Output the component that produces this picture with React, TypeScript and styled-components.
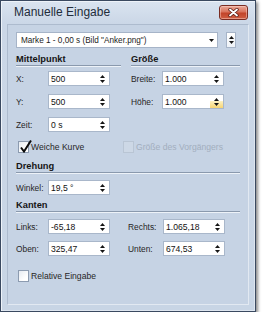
import React from "react";
import styled, { createGlobalStyle } from "styled-components";

const GlobalStyle = createGlobalStyle`
  html, body {
    margin: 0;
    padding: 0;
    background: #ffffff;
  }
  body {
    font-family: "Liberation Sans", Arial, sans-serif;
    color: #1c1c1c;
  }
`;

const Window = styled.div`
  width: 254px;
  height: 310px;
  border: 1px solid #3a4960;
  background: linear-gradient(#dae4f0 0px, #cbd7e7 22px, #c8d5e5 100%);
  box-shadow: inset 1px 1px 0 #eef3f9, inset -1px -1px 0 #dde5ef,
    2px 2px 3px rgba(0, 0, 0, 0.45);
  display: flex;
  flex-direction: column;
`;

const TitleBar = styled.div`
  height: 23px;
  display: flex;
  align-items: flex-start;
  padding: 4px 7px 0 13px;
  box-sizing: border-box;
`;

const Title = styled.div`
  font-size: 12px;
  line-height: 14px;
  color: #222c3a;
`;

const CloseButton = styled.div`
  margin-left: auto;
  width: 29px;
  height: 15px;
  box-sizing: border-box;
  border: 1px solid #7a2c22;
  border-radius: 3px;
  background: linear-gradient(#eaa898 0%, #d9735c 45%, #c2442a 55%, #cf5e42 100%);
  box-shadow: inset 0 0 0 1px rgba(255, 220, 210, 0.45);
  display: flex;
  align-items: center;
  justify-content: center;
`;

const Client = styled.div`
  flex: 1;
  margin: 0 6px 6px 6px;
  border: 1px solid;
  border-color: #adbbce #e2e9f2 #e2e9f2 #adbbce;
  background: #c6d3e4;
  padding: 7px 8px 0 8px;
  display: flex;
  flex-direction: column;
`;

const DropRow = styled.div`
  display: flex;
  gap: 8px;
  height: 16px;
`;

const Dropdown = styled.div`
  width: 202px;
  height: 16px;
  box-sizing: border-box;
  border: 1px solid #a6b4c8;
  background: #ffffff;
  display: flex;
  align-items: center;
  justify-content: space-between;
  padding: 0 3px 0 4px;
  font-size: 8.2px;
  white-space: nowrap;
`;

const SpinBox = styled.div`
  width: 10px;
  height: 16px;
  box-sizing: border-box;
  border: 1px solid #a6b4c8;
  background: linear-gradient(#ffffff, #eef2f7);
  display: flex;
  flex-direction: column;
  align-items: center;
  justify-content: center;
  gap: 2px;
`;

const Columns = styled.div`
  display: grid;
  grid-template-columns: 105px 1fr;
  column-gap: 10px;
  margin-top: 6px;
`;

const Column = styled.div`
  display: flex;
  flex-direction: column;
`;

const SectionTitle = styled.div<{ $top?: number; $bottom?: number }>`
  font-size: 9.3px;
  font-weight: bold;
  line-height: 11px;
  color: #151515;
  border-bottom: 1px solid #8a99ad;
  box-shadow: 0 1px 0 #edf2f8;
  margin-top: ${(p) => p.$top ?? 0}px;
  margin-bottom: ${(p) => p.$bottom ?? 0}px;
`;

const Stack = styled.div<{ $gap: number }>`
  display: flex;
  flex-direction: column;
  gap: ${(p) => p.$gap}px;
`;

const Field = styled.div`
  display: flex;
  align-items: center;
  height: 15px;
`;

const Label = styled.span<{ $w: number }>`
  width: ${(p) => p.$w}px;
  font-size: 8.4px;
  color: #262626;
  white-space: nowrap;
`;

const InputBox = styled.div`
  position: relative;
  width: 62px;
  height: 15px;
  box-sizing: border-box;
  border: 1px solid #a9b7ca;
  background: #ffffff;
  display: flex;
  align-items: center;
  padding-left: 2px;
  font-size: 8.6px;
  color: #111111;
`;

const Arrows = styled.div<{ $hot?: boolean }>`
  position: absolute;
  right: 0;
  top: 0;
  bottom: 0;
  width: 13px;
  display: flex;
  flex-direction: column;
  align-items: center;
  justify-content: center;
  gap: 2px;
  background: ${(p) =>
    p.$hot
      ? "linear-gradient(transparent 0 50%, #fdf0bd 50%, #f7d472 100%)"
      : "transparent"};
`;

const CheckRow = styled.div<{ $top: number }>`
  display: flex;
  align-items: center;
  margin-top: ${(p) => p.$top}px;
  padding-left: 2px;
  height: 12px;
`;

const CheckItem = styled.div<{ $w?: number }>`
  display: flex;
  align-items: center;
  gap: 2px;
  width: ${(p) => (p.$w ? `${p.$w}px` : "auto")};
`;

const Box = styled.div<{ $disabled?: boolean }>`
  position: relative;
  width: 11px;
  height: 12px;
  box-sizing: border-box;
  border: 1px solid ${(p) => (p.$disabled ? "#b9c5d4" : "#8c9bb0")};
  background: ${(p) =>
    p.$disabled
      ? "#cdd8e6"
      : "linear-gradient(135deg, #e6ebf1 0%, #ffffff 70%)"};
`;

const Tick = styled.svg`
  position: absolute;
  left: 0px;
  top: -3px;
`;

const CheckText = styled.span<{ $disabled?: boolean }>`
  font-size: 8.6px;
  color: ${(p) => (p.$disabled ? "#a2aebe" : "#262626")};
  white-space: nowrap;
`;

const EdgeGrid = styled.div`
  display: grid;
  grid-template-columns: 112px 1fr;
  row-gap: 7px;
`;

const Up = () => (
  <svg width="5" height="3" viewBox="0 0 5 3">
    <polygon points="2.5,0 5,3 0,3" fill="#151515" />
  </svg>
);

const Down = () => (
  <svg width="5" height="3" viewBox="0 0 5 3">
    <polygon points="0,0 5,0 2.5,3" fill="#151515" />
  </svg>
);

const Spin = ({ value, hot }: { value: string; hot?: boolean }) => (
  <InputBox>
    {value}
    <Arrows $hot={hot}>
      <Up />
      <Down />
    </Arrows>
  </InputBox>
);

const Row = ({
  label,
  w,
  value,
  hot,
}: {
  label: string;
  w: number;
  value: string;
  hot?: boolean;
}) => (
  <Field>
    <Label $w={w}>{label}</Label>
    <Spin value={value} hot={hot} />
  </Field>
);

const Check = ({
  text,
  checked,
  disabled,
  w,
}: {
  text: string;
  checked?: boolean;
  disabled?: boolean;
  w?: number;
}) => (
  <CheckItem $w={w}>
    <Box $disabled={disabled}>
      {checked && (
        <Tick width="13" height="14" viewBox="0 0 13 14">
          <path
            d="M2 8.5 L5 12.5 L12 1.5"
            fill="none"
            stroke="#0c0c0c"
            strokeWidth="2"
          />
        </Tick>
      )}
    </Box>
    <CheckText $disabled={disabled}>{text}</CheckText>
  </CheckItem>
);

export default function App() {
  return (
    <>
      <GlobalStyle />
      <Window>
        <TitleBar>
          <Title>Manuelle Eingabe</Title>
          <CloseButton>
            <svg width="11" height="9" viewBox="0 0 11 9">
              <path
                d="M2 1.5 L9 7.5 M9 1.5 L2 7.5"
                stroke="#5a1c14"
                strokeWidth="3.4"
                strokeLinecap="round"
              />
              <path
                d="M2 1.5 L9 7.5 M9 1.5 L2 7.5"
                stroke="#ffffff"
                strokeWidth="1.8"
                strokeLinecap="round"
              />
            </svg>
          </CloseButton>
        </TitleBar>
        <Client>
          <DropRow>
            <Dropdown>
              <span>Marke 1 - 0,00 s (Bild "Anker.png")</span>
              <Down />
            </Dropdown>
            <SpinBox>
              <Up />
              <Down />
            </SpinBox>
          </DropRow>

          <Columns>
            <Column>
              <SectionTitle $bottom={5}>Mittelpunkt</SectionTitle>
              <Stack $gap={8}>
                <Row label="X:" w={32} value="500" />
                <Row label="Y:" w={32} value="500" />
                <Row label="Zeit:" w={32} value="0 s" />
              </Stack>
            </Column>
            <Column>
              <SectionTitle $bottom={5}>Größe</SectionTitle>
              <Stack $gap={8}>
                <Row label="Breite:" w={31} value="1.000" />
                <Row label="Höhe:" w={31} value="1.000" hot />
              </Stack>
            </Column>
          </Columns>

          <CheckRow $top={9}>
            <Check text="Weiche Kurve" checked w={105} />
            <Check text="Größe des Vorgängers" disabled />
          </CheckRow>

          <SectionTitle $top={8} $bottom={7}>
            Drehung
          </SectionTitle>
          <Row label="Winkel:" w={32} value="19,5 °" />

          <SectionTitle $top={5} $bottom={7}>
            Kanten
          </SectionTitle>
          <EdgeGrid>
            <Row label="Links:" w={32} value="-65,18" />
            <Row label="Rechts:" w={35} value="1.065,18" />
            <Row label="Oben:" w={32} value="325,47" />
            <Row label="Unten:" w={35} value="674,53" />
          </EdgeGrid>

          <CheckRow $top={14}>
            <Check text="Relative Eingabe" />
          </CheckRow>
        </Client>
      </Window>
    </>
  );
}
